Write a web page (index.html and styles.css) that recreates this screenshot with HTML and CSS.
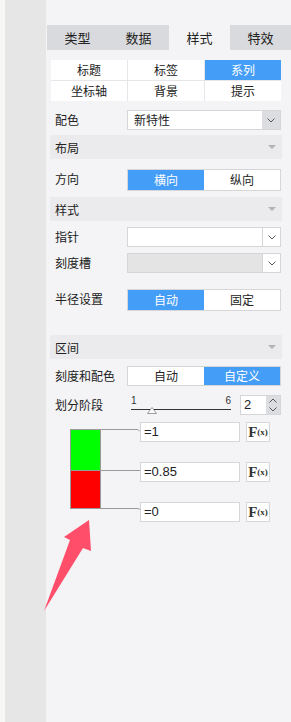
FILE: index.html
```html
<!doctype html>
<html>

<head>
    <meta charset="utf-8" />
    <title>样式</title>
    <link rel="stylesheet" href="styles.css">
</head>

<body>
    <div class="app">
        <div class="edge"></div>
        <div class="rail"></div>
        <div class="panel">
            <div class="tabs">
                <div class="tab">类型</div>
                <div class="tab">数据</div>
                <div class="tab active">样式</div>
                <div class="tab">特效</div>
            </div>
            <div class="content">
                <div class="subtabs">
                    <div class="subtab">标题</div>
                    <div class="subtab">标签</div>
                    <div class="subtab on">系列</div>
                    <div class="subtab">坐标轴</div>
                    <div class="subtab">背景</div>
                    <div class="subtab">提示</div>
                </div>

                <div class="row gap-9">
                    <span class="label">配色</span>
                    <div class="select filled">
                        <span class="value">新特性</span>
                        <span class="btn"><svg width="8" height="5"><polyline points="0.5,0.5 4,4 7.5,0.5" /></svg></span>
                    </div>
                </div>

                <div class="group gap-5">布局 <i class="caret"></i></div>

                <div class="row gap-10">
                    <span class="label">方向</span>
                    <div class="toggle"><span class="on">横向</span><span>纵向</span></div>
                </div>

                <div class="group gap-6">样式 <i class="caret"></i></div>

                <div class="row gap-6">
                    <span class="label">指针</span>
                    <div class="select split">
                        <span class="value"></span>
                        <span class="btn"><svg width="8" height="5"><polyline points="0.5,0.5 4,4 7.5,0.5" /></svg></span>
                    </div>
                </div>

                <div class="row gap-6">
                    <span class="label">刻度槽</span>
                    <div class="select split disabled">
                        <span class="value"></span>
                        <span class="btn"><svg width="8" height="5"><polyline points="0.5,0.5 4,4 7.5,0.5" /></svg></span>
                    </div>
                </div>

                <div class="row gap-16">
                    <span class="label">半径设置</span>
                    <div class="toggle"><span class="on">自动</span><span>固定</span></div>
                </div>

                <div class="group gap-24">区间 <i class="caret"></i></div>

                <div class="row gap-7">
                    <span class="label">刻度和配色</span>
                    <div class="toggle slim"><span>自动</span><span class="on">自定义</span></div>
                </div>

                <div class="row gap-9">
                    <span class="label">划分阶段</span>
                    <div class="slider">
                        <div class="scale"><span>1</span><span>6</span></div>
                        <div class="track"></div>
                        <svg class="thumb" width="10" height="7"><polygon points="5,0.5 9.5,6.5 0.5,6.5" /></svg>
                    </div>
                    <div class="num">
                        <span class="num-value">2</span>
                        <span class="spin">
                            <svg width="8" height="5"><polyline points="0.5,4.5 4,1 7.5,4.5" /></svg>
                            <svg width="8" height="5"><polyline points="0.5,0.5 4,4 7.5,0.5" /></svg>
                        </span>
                    </div>
                </div>

                <div class="ranges">
                    <div class="bars">
                        <div class="bar green"></div>
                        <div class="bar red"></div>
                    </div>
                    <svg class="links" width="39" height="100">
                        <path d="M0 7.5 H37 L39 9.5 M0 48.5 H39 M0 86.5 H37 L39 87.5" />
                    </svg>
                    <div class="stops">
                        <div class="stop"><span class="expr">=1</span><span class="fx"><b>F</b><small>(x)</small></span></div>
                        <div class="stop"><span class="expr">=0.85</span><span class="fx"><b>F</b><small>(x)</small></span></div>
                        <div class="stop"><span class="expr">=0</span><span class="fx"><b>F</b><small>(x)</small></span></div>
                    </div>
                </div>
            </div>
        </div>

        <svg class="arrow" width="291" height="722">
            <polygon points="44,611 70,540 64,537 89,520 91,551 83,548" />
        </svg>
    </div>
</body>

</html>
```

FILE: styles.css
```css
* {
    box-sizing: border-box;
}

html,
body {
    margin: 0;
    padding: 0;
    height: 100%;
}

body {
    font-family: "Noto Sans CJK SC", "Noto Sans", sans-serif;
    font-size: 12px;
    color: #222;
}

.app {
    position: relative;
    display: flex;
    min-height: 100vh;
}

.edge {
    width: 5px;
    background: #f7f7f5;
}

.rail {
    width: 41px;
    background: #e6e6e6;
}

.panel {
    flex: 1;
    background: #f4f4f6;
}

/* top tabs */
.tabs {
    display: grid;
    grid-template-columns: repeat(4, 1fr);
    height: 25px;
    margin: 25px 0 0 1px;
    background: #d9dadd;
}

.tab {
    font-size: 13px;
    line-height: 25px;
    text-align: center;
}

.tab.active {
    background: #f4f4f6;
}

.content {
    padding: 0 10px 0 5px;
}

.subtabs {
    display: grid;
    grid-template-columns: repeat(3, 1fr);
    gap: 1px;
    margin-top: 10px;
    background: #e6e6e8;
}

.subtab {
    height: 20px;
    line-height: 20px;
    text-align: center;
    background: #fff;
}

.subtab.on {
    background: #449df6;
    color: #fff;
}

/* rows */
.row {
    display: flex;
    align-items: flex-start;
}

.gap-5 { margin-top: 5px; }
.gap-6 { margin-top: 6px; }
.gap-7 { margin-top: 7px; }
.gap-9 { margin-top: 9px; }
.gap-10 { margin-top: 10px; }
.gap-16 { margin-top: 16px; }
.gap-24 { margin-top: 24px; }

.label {
    flex: none;
    width: 76px;
    padding-left: 4px;
    line-height: 20px;
}

.group {
    display: flex;
    justify-content: space-between;
    align-items: center;
    height: 24px;
    margin-left: -1px;
    margin-right: -1px;
    padding: 0 6px 0 5px;
    background: #ebebed;
}

.caret {
    width: 0;
    height: 0;
    border-left: 4px solid transparent;
    border-right: 4px solid transparent;
    border-top: 4px solid #b4b4b6;
}

/* selects */
.select {
    flex: 1;
    display: flex;
    height: 20px;
    border: 1px solid #d6d6d8;
    background: #fff;
}

.select .value {
    flex: 1;
    padding-left: 6px;
    line-height: 18px;
}

.select .btn {
    width: 18px;
    display: flex;
    align-items: center;
    justify-content: center;
}

.select svg polyline,
.spin svg polyline {
    fill: none;
    stroke: #555;
    stroke-width: 1;
}

.select.filled .btn {
    background: #dcdde0;
}

.select.split .btn {
    border-left: 1px solid #d6d6d8;
}

.select.disabled .value {
    background: #e4e4e4;
}

/* toggles */
.toggle {
    flex: 1;
    display: flex;
    height: 22px;
    border: 1px solid #d6d6d8;
    background: #fff;
}

.toggle.slim {
    height: 20px;
}

.toggle span {
    flex: 1;
    text-align: center;
    line-height: 20px;
}

.toggle.slim span {
    line-height: 18px;
}

.toggle .on {
    background: #449df6;
    color: #fff;
}

/* slider */
.slider {
    position: relative;
    width: 100px;
    margin-left: 4px;
}

.scale {
    display: flex;
    justify-content: space-between;
    height: 11px;
    font-family: "Liberation Sans", sans-serif;
    font-size: 10px;
    line-height: 11px;
    color: #333;
}

.track {
    height: 1px;
    margin-top: 3px;
    background: #333;
}

.thumb {
    position: absolute;
    left: 16px;
    top: 12px;
}

.thumb polygon {
    fill: #fff;
    stroke: #999;
}

.num {
    display: flex;
    width: 41px;
    height: 20px;
    margin-left: auto;
    border: 1px solid #d6d6d8;
    background: #fff;
}

.num-value {
    flex: 1;
    padding-left: 3px;
    font-family: "Liberation Sans", sans-serif;
    font-size: 13px;
    line-height: 18px;
}

.spin {
    width: 14px;
    display: flex;
    flex-direction: column;
    justify-content: space-around;
    align-items: center;
    background: #dcdde0;
}

.spin svg {
    display: block;
}

/* colour ranges */
.ranges {
    display: flex;
    margin-top: 7px;
}

.bars {
    width: 31px;
    margin: 7px 0 0 19px;
    align-self: flex-start;
    border: 1px solid #999;
}

.bar.green {
    height: 40px;
    background: #00ff00;
}

.bar.red {
    height: 38px;
    background: #ff0000;
    border-top: 1px solid #999;
}

.links path {
    fill: none;
    stroke: #999;
}

.stops {
    display: flex;
    flex-direction: column;
    gap: 20px;
}

.stop {
    display: flex;
    gap: 6px;
}

.expr {
    width: 100px;
    height: 20px;
    padding-left: 3px;
    border: 1px solid #d6d6d8;
    background: #fff;
    font-family: "Liberation Sans", sans-serif;
    font-size: 13px;
    line-height: 18px;
}

.fx {
    display: flex;
    align-items: center;
    justify-content: center;
    width: 24px;
    height: 20px;
    border: 1px solid #d6d6d8;
    background: #fff;
    font-family: "Liberation Serif", serif;
    color: #333;
}

.fx b {
    font-size: 15px;
    font-weight: bold;
}

.fx small {
    font-size: 9px;
    font-weight: bold;
}

.arrow {
    position: absolute;
    left: 0;
    top: 0;
    pointer-events: none;
}

.arrow polygon {
    fill: #ff4e69;
}
```
